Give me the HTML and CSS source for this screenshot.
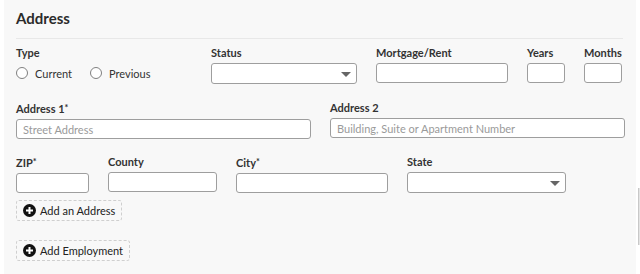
FILE: index.html
```
<!DOCTYPE html>
<html lang="en">
<head>
  <meta charset="UTF-8" />
  <title>Address</title>
  <link rel="stylesheet" href="styles.css">
</head>
<body>
  <div class="panel">
    <h2 class="section-title">Address</h2>

    <div class="row row-top">
      <div class="field">
        <label>Type</label>
        <div class="radio-group">
          <span class="radio"><span class="dot"></span>Current</span>
          <span class="radio"><span class="dot"></span>Previous</span>
        </div>
      </div>
      <div class="field">
        <label>Status</label>
        <div class="select"></div>
      </div>
      <div class="field">
        <label>Mortgage/Rent</label>
        <input type="text" />
      </div>
      <div class="field">
        <label>Years</label>
        <input type="text" />
      </div>
      <div class="field">
        <label>Months</label>
        <input type="text" />
      </div>
    </div>

    <div class="row row-street">
      <div class="field">
        <label>Address 1<span class="req">*</span></label>
        <input type="text" placeholder="Street Address" />
      </div>
      <div class="field">
        <label>Address 2</label>
        <input type="text" placeholder="Building, Suite or Apartment Number" />
      </div>
    </div>

    <div class="row row-city">
      <div class="field">
        <label>ZIP<span class="req">*</span></label>
        <input type="text" />
      </div>
      <div class="field">
        <label>County</label>
        <input type="text" />
      </div>
      <div class="field">
        <label>City<span class="req">*</span></label>
        <input type="text" />
      </div>
      <div class="field">
        <label>State</label>
        <div class="select"></div>
      </div>
    </div>

    <div class="actions">
      <button class="add-btn">
        <svg width="13" height="13" viewBox="0 0 13 13"><circle cx="6.5" cy="6.5" r="6.5" fill="#111"/><path d="M6.5 3v7M3 6.5h7" stroke="#fff" stroke-width="2"/></svg>
        Add an Address
      </button>
      <button class="add-btn">
        <svg width="13" height="13" viewBox="0 0 13 13"><circle cx="6.5" cy="6.5" r="6.5" fill="#111"/><path d="M6.5 3v7M3 6.5h7" stroke="#fff" stroke-width="2"/></svg>
        Add Employment
      </button>
    </div>
  </div>
  <div class="scroll-thumb"></div>
</body>
</html>
```

FILE: styles.css
```
body {
  margin: 0;
  background: #fff;
  font-family: Lato, "Liberation Sans", sans-serif;
  color: #333;
}

.panel {
  margin-left: 4px;
  width: 632px;
  height: 274px;
  box-sizing: border-box;
  padding: 8px 13px 0 12px;
  background: #f8f8f8;
}

.section-title {
  margin: 0;
  font-size: 15px;
  font-weight: 700;
  line-height: 20px;
  color: #2b2b2b;
  padding-bottom: 10px;
  border-bottom: 1px solid #e8e8e8;
}

.row {
  display: grid;
  column-gap: 19px;
}

.row-top {
  margin-top: 7px;
  grid-template-columns: 176px 146px 132px 38px 38px;
}

.row-street {
  margin-top: 17px;
  grid-template-columns: 295px 295px;
}

.row-city {
  margin-top: 16px;
  grid-template-columns: 73px 109px 152px 159px;
}

.field label {
  display: block;
  font-size: 11px;
  font-weight: 700;
  line-height: 14px;
  margin-bottom: 3px;
  color: #333;
}

.req {
  font-size: 9px;
  vertical-align: 2px;
}

.field input,
.select {
  display: block;
  width: 100%;
  height: 20px;
  box-sizing: border-box;
  margin: 0;
  border: 1px solid #9e9e9e;
  border-radius: 3px;
  background: #fff;
  padding: 0 6px;
  font-family: inherit;
  font-size: 11px;
  color: #333;
}

.field input::placeholder {
  color: #9a9a9a;
}

.select {
  position: relative;
  height: 21px;
}

.select::after {
  content: "";
  position: absolute;
  right: 5px;
  top: 8px;
  border-left: 5px solid transparent;
  border-right: 5px solid transparent;
  border-top: 5px solid #666;
}

.radio-group {
  display: flex;
  gap: 18px;
  height: 20px;
  align-items: center;
}

.radio {
  display: flex;
  align-items: center;
  gap: 7px;
  font-size: 11px;
  color: #333;
}

.dot {
  width: 12px;
  height: 12px;
  box-sizing: border-box;
  border: 1px solid #808080;
  border-radius: 50%;
  background: #fff;
}

.actions {
  display: flex;
  flex-direction: column;
  align-items: flex-start;
  gap: 19px;
  margin-top: 7px;
}

.add-btn {
  display: flex;
  align-items: center;
  gap: 4px;
  height: 21px;
  padding: 0 6px 0 6px;
  border: 1px dashed #cfcfcf;
  border-radius: 3px;
  background: transparent;
  font-family: inherit;
  font-size: 11px;
  color: #222;
}

.scroll-thumb {
  position: absolute;
  left: 638px;
  top: 188px;
  width: 2px;
  height: 57px;
  background: #e4e4e4;
  border-left: 1px solid #c8c8c8;
}
```
